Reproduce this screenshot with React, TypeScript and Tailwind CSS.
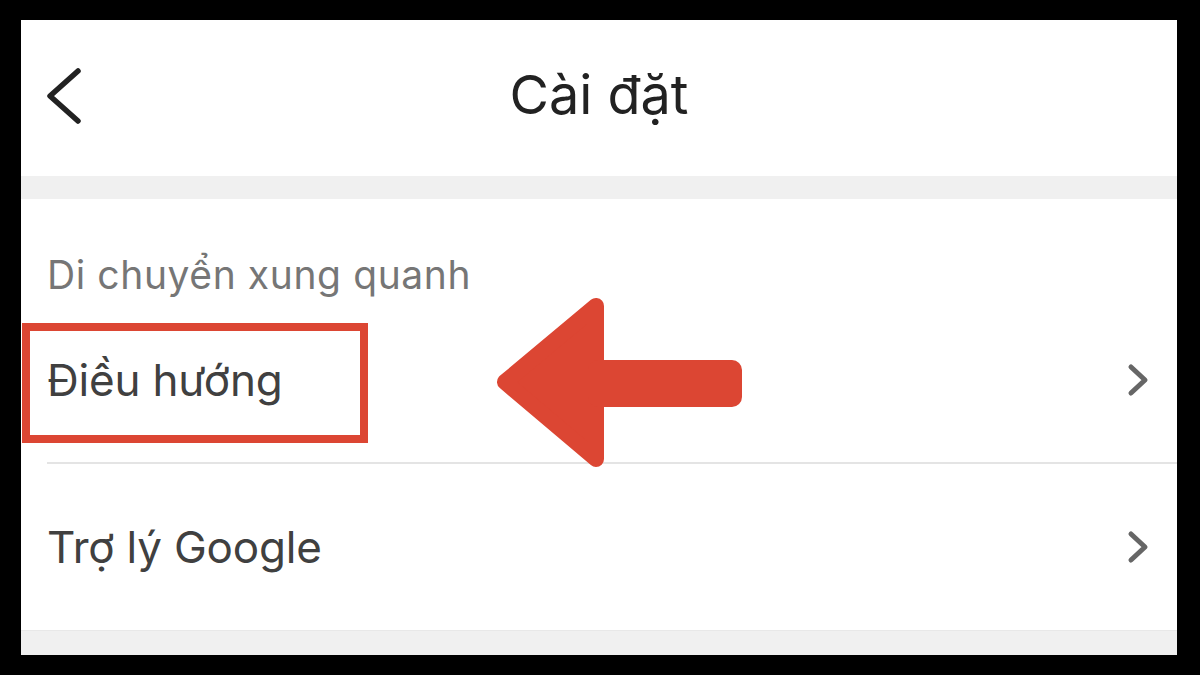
import React from "react";

function ChevronRight() {
  return (
    <svg width="22" height="34" viewBox="0 0 22 34" className="shrink-0">
      <polyline points="4,4 18,17 4,30" fill="none" stroke="#666666" strokeWidth="5" strokeLinecap="round" strokeLinejoin="round" />
    </svg>
  );
}

function Row({ label, border }: { label: string; border?: boolean }) {
  return (
    <div className={"h-[166px] ml-[26px] flex items-center justify-between pr-[28px] " + (border ? "border-b-2 border-[#e4e4e4]" : "")}>
      <span className="text-[44px] leading-none text-[#404040] tracking-[-0.2px]" style={{ fontFamily: "Inter, 'Liberation Sans', sans-serif" }}>
        {label}
      </span>
      <ChevronRight />
    </div>
  );
}

export default function App() {
  return (
    <div className="relative w-[1200px] h-[675px] bg-black pt-[20px] pl-[21px] pr-[23px] pb-[20px]">
      <div className="h-full bg-white flex flex-col">
        <div className="h-[156px] grid grid-cols-[1fr_auto_1fr] items-center">
          <div className="pl-[24px] pb-[2px]">
            <svg width="38" height="62" viewBox="0 0 38 62">
              <polyline points="33,5 5,30 33,55" fill="none" stroke="#222222" strokeWidth="5.5" strokeLinecap="round" strokeLinejoin="round" />
            </svg>
          </div>
          <h1 className="text-[54px] leading-none text-[#222222] pb-[6px]" style={{ fontFamily: "Inter, 'Liberation Sans', sans-serif" }}>
            Cài đặt
          </h1>
          <div />
        </div>
        <div className="h-[23px] bg-[#f0f0f0]" />
        <div className="flex-1 flex flex-col">
          <div className="h-[99px] pl-[26px] pt-[56px]">
            <span className="text-[39px] leading-none text-[#767676] tracking-[0.6px]" style={{ fontFamily: "Inter, 'Liberation Sans', sans-serif" }}>
              Di chuyển xung quanh
            </span>
          </div>
          <Row label="Điều hướng" border />
          <Row label="Trợ lý Google" />
        </div>
        <div className="h-[25px] bg-[#f0f0f0] border-t border-[#e8e8e8]" />
      </div>

      <div className="absolute left-[22px] top-[323px] w-[346px] h-[120px] border-[8px] border-[#dc4633]" />

      <svg className="absolute left-0 top-0 pointer-events-none" width="1200" height="675" viewBox="0 0 1200 675">
        <g fill="#dc4633" stroke="#dc4633" strokeLinejoin="round" strokeWidth="16">
          <polygon points="505,382 596,306 596,459" />
          <rect x="596" y="368" width="138" height="31" rx="2" />
        </g>
      </svg>
    </div>
  );
}
